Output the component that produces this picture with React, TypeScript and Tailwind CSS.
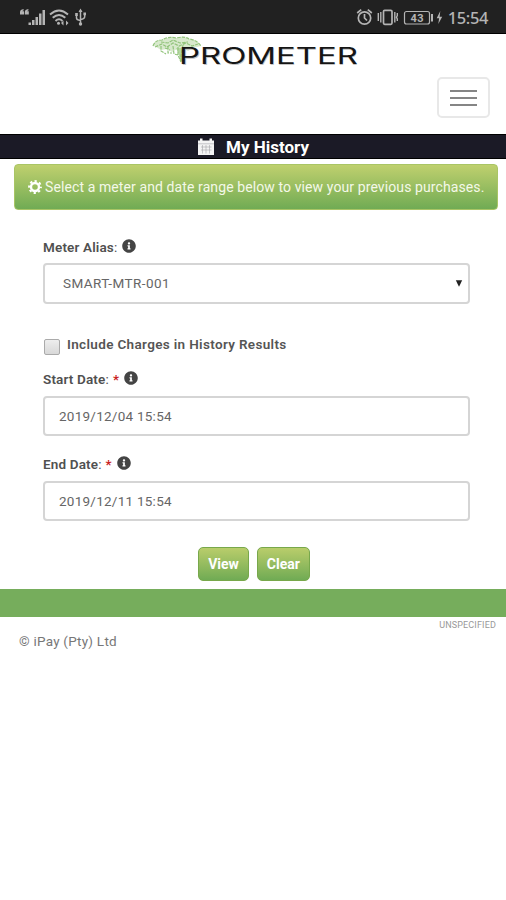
import type { ReactNode } from "react";
import { FaInfoCircle } from "react-icons/fa";

function StatusBar() {
    return (
        <div className="h-[34px] bg-[#212121] border-b border-black flex items-center justify-between pl-5 pr-[18px] text-[#b4b4b4]">
            <svg width="68" height="20" viewBox="0 0 68 20" className="mt-[2px]" fill="currentColor">
                <path d="M0 4.200Q0 1.500 3.600 1V2.400Q2.400 2.600 2.400 3.200H4V6.500H0ZM4.800 4.200Q4.800 1.500 8.400 1V2.400Q7.200 2.600 7.200 3.200H8.800V6.500H4.800Z" />
                <path d="M8.500 14.500h2.500v2.500h-2.500ZM12 12h2.500v5h-2.500ZM15.500 9h2.500v8h-2.500ZM19 5.500h2.500v11.500h-2.500ZM22.500 2h2.500v15h-2.500Z" />
                <g fill="none" stroke="currentColor" strokeWidth="1.900">
                    <path d="M30 6.500Q39 -1.500 48 6.500" />
                    <path d="M32.700 9.800Q39 4 45.300 9.800" />
                    <path d="M35.500 13Q39 9.600 42.500 13" />
                    <path d="M60.500 2V16M56.500 7v3q0 2 4 2.500M64.700 6.500v2q0 2.500-4.200 3" strokeWidth="1.500" />
                </g>
                <circle cx="38.500" cy="15.300" r="1.500" />
                <path d="M41 15l2.500-2.600v5.200ZM48.500 15l-2.500-2.600v5.200Z" />
                <path d="M58.500 4l2-3.500 2 3.500ZM55.200 5h2.600v3h-2.600ZM63.400 4.500h2.600v2.800h-2.600Z" />
                <circle cx="60.500" cy="16" r="1.700" />
            </svg>
            <div className="flex items-center">
                <svg width="90" height="20" viewBox="0 0 90 20" fill="none" stroke="currentColor" strokeWidth="1.700">
                    <circle cx="9.500" cy="11" r="6.200" />
                    <path d="M9.500 7v4l2.500 2.500M2.200 6l4-3.300M16.800 6l-4-3.300" />
                    <rect x="28.500" y="3.300" width="8.500" height="14" rx="1.200" />
                    <path d="M25.800 5v10.500M23.300 6v8M39.800 5v10.500M42.300 6v2.500l-.8 1.700.8 1.800v2" strokeWidth="1.400" />
                    <rect x="49.500" y="4.500" width="25" height="12.500" rx="2" strokeWidth="1.200" />
                    <path d="M77 7v7.500" strokeWidth="2" />
                    <path d="M85.300 4l-3.600 7.300h2.400l-.8 5.700 3.900-7.300h-2.600Z" fill="currentColor" stroke="none" />
                    <text x="62" y="14.700" textAnchor="middle" textLength="13" fontSize="11" fontFamily="Roboto, sans-serif" fontWeight="700" fill="currentColor" stroke="none">43</text>
                </svg>
                <span className="ml-[3px] mt-[3px] text-[16.5px] leading-5 tracking-[-0.4px] font-['Noto_Sans',sans-serif] font-medium">15:54</span>
            </div>
        </div>
    );
}

function Logo() {
    return (
        <svg width="212" height="38" viewBox="0 0 212 38" className="ml-[151px]">
            <path d="M2 11q2-5 9-5 6-4 14-2 9-2 13 1 8 1 12 7l-8 2-5 3-5-3-6 1-5 3-5-3-6 1Z" fill="#d8e9cd" />
            <path d="M25 14h10l-2 6v8l-4-1-1-6Z" fill="#b4d7a2" />
            <g fill="none" stroke="#92c47b" strokeWidth="1.200" strokeDasharray="3.500 1">
                <path d="M2 12q2-6 9-6 6-4 14-2 9-2 13 1 8 1 12 7" />
                <path d="M4 13l7-3 5 3 6-4 6 3 7-3 6 3 6-2M10 8l7 1 5-3 7 3 8-1" />
                <path d="M10 12v5l5 3M17 12v7h4M14 14l5 2M22 12l1 8 4 1M27 13v8l3 7M32 11l-2 10v7" />
            </g>
            <g fontFamily="Inter, sans-serif" fontWeight="400" fontSize="22.500">
                <text x="29" y="31.300" textLength="178" lengthAdjust="spacingAndGlyphs" fill="#c4c4c4" aria-hidden="true">PROMETER</text>
                <text x="28" y="30.300" textLength="179" lengthAdjust="spacingAndGlyphs" fill="#151515">PROMETER</text>
            </g>
        </svg>
    );
}

function CalendarIcon() {
    return (
        <svg width="18" height="18" viewBox="0 0 18 18" fill="#f4f4f4">
            <path d="M1 2.500h2V.5h2.500v2h7V.5H15v2h2V17H1Z" />
            <path d="M1 5.800h16M4 9h10.500M4 12h10.500M5.500 7v8.500M9 7v8.500M12.500 7v8.500" stroke="#a5a5aa" strokeWidth=".6" />
        </svg>
    );
}

function CogIcon() {
    return (
        <svg width="14" height="14" viewBox="0 0 14 14" fill="none" stroke="#fff">
            <circle cx="7" cy="7" r="4" strokeWidth="2.400" />
            <circle cx="7" cy="7" r="5.900" strokeWidth="2" strokeDasharray="2.300 2.334" strokeDashoffset="1.150" />
        </svg>
    );
}

function Label({ children, required }: { children: ReactNode; required?: boolean }) {
    return (
        <div className="flex items-center h-[18px] text-[13.5px] leading-[18px] font-semibold tracking-[0.15px] text-[#505050]">
            <span>{children}</span>
            <span className="font-normal">:</span>
            {required && <span className="ml-1 text-[#c8201c]">*</span>}
            <FaInfoCircle size={14} className="ml-[5px] -mt-[2px] text-[#444]" />
        </div>
    );
}

function Field({ value }: { value: string }) {
    return (
        <div className="h-10 border-2 border-[#d5d5d5] rounded-[4px] flex items-center pl-[14px] text-[13.5px] text-[#666] tracking-[0.25px]">
            {value}
        </div>
    );
}

function Button({ children }: { children: ReactNode }) {
    return (
        <button className="h-[34px] px-[9px] rounded-[5px] border border-[#78a84b] bg-linear-to-b from-[#b9cd6b] to-[#70ab54] text-white text-[14px] leading-5 font-bold">
            {children}
        </button>
    );
}

export default function App() {
    return (
        <div className="h-[900px] w-full bg-white overflow-hidden font-[Roboto,sans-serif]">
            <StatusBar />

            <header className="h-[100px] flex flex-col">
                <Logo />
                <button className="self-end mr-4 mt-[5px] w-[53px] h-[41px] border-2 border-[#e8e8e8] rounded-[5px] flex flex-col items-center justify-center gap-[5px]">
                    <span className="w-[27px] h-[2px] bg-[#858585]" />
                    <span className="w-[27px] h-[2px] bg-[#858585]" />
                    <span className="w-[27px] h-[2px] bg-[#858585]" />
                </button>
            </header>

            <div className="h-[25px] bg-[#1b1a26] border-y border-black flex items-center justify-center gap-[11px] text-white text-[17px] leading-5 font-bold">
                <CalendarIcon />
                <h1>My History</h1>
            </div>

            <div className="mt-[5px] ml-[14px] mr-2 h-[46px] rounded-[4px] border border-[#a9c565] bg-linear-to-b from-[#bfd06e] to-[#70ab54] flex items-center pl-[13px] gap-[3px] text-[#f4f8e8] text-[14px] tracking-[0.1px] whitespace-nowrap">
                <CogIcon />
                <span>Select a meter and date range below to view your previous purchases.</span>
            </div>

            <main className="pl-[43px] pr-[36px] pt-7">
                <Label>Meter Alias</Label>
                <div className="mt-[7px] h-[41px] border-2 border-[#d5d5d5] rounded-[4px] flex items-center justify-between pl-[18px] pr-[5px] text-[13.5px] tracking-[0.45px] text-[#666]">
                    <span>SMART-MTR-001</span>
                    <svg width="8" height="7" viewBox="0 0 8 7">
                        <path d="M.8 .3h6.400L4 6.700Z" fill="#222" />
                    </svg>
                </div>

                <div className="mt-[31px] h-[20px] flex text-[13.5px] leading-[18px] font-semibold tracking-[0.34px] text-[#555]">
                    <span className="mt-[4px] ml-px size-4 border border-[#aaa] rounded-[2px] bg-linear-to-b from-[#eee] to-[#d8d8d8]" />
                    <span className="ml-[7px]">Include Charges in History Results</span>
                </div>

                <div className="mt-[15px]">
                    <Label required>Start Date</Label>
                </div>
                <div className="mt-[8px]">
                    <Field value="2019/12/04 15:54" />
                </div>

                <div className="mt-[19px]">
                    <Label required>End Date</Label>
                </div>
                <div className="mt-[8px]">
                    <Field value="2019/12/11 15:54" />
                </div>
            </main>

            <div className="mt-[26px] ml-[2px] flex justify-center gap-2">
                <Button>View</Button>
                <Button>Clear</Button>
            </div>

            <div className="mt-2 h-[28px] bg-[#76ad5c]" />
            <footer className="flex justify-between pl-[19px] pr-[10px] text-[#777]">
                <span className="mt-[15px] text-[13.5px] leading-[18px] tracking-[0.24px]">© iPay (Pty) Ltd</span>
                <span className="mt-[2px] text-[9px] leading-3 tracking-[0.15px] text-[#999]">UNSPECIFIED</span>
            </footer>
        </div>
    );
}
